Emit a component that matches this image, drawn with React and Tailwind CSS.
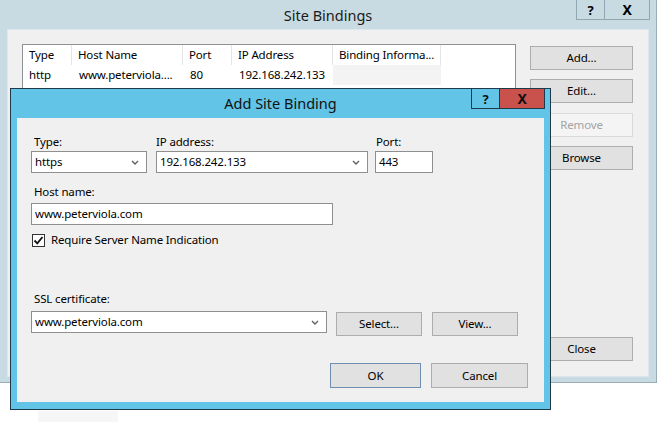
import React from "react";

const Chevron = () => (
  <svg width="8" height="5" viewBox="0 0 8 5" className="shrink-0">
    <polyline points="1,1 4,4 7,1" fill="none" stroke="#606060" strokeWidth="1.4" />
  </svg>
);

const Btn = ({ children, className = "", disabled = false }) => (
  <div
    className={
      "flex items-center justify-center border " +
      (disabled
        ? "bg-[#f4f4f4] border-[#d9d9d9] text-[#a3a3a3] "
        : "bg-[#e1e1e1] border-[#adadad] text-black ") +
      className
    }
  >
    {children}
  </div>
);

const Select = ({ value, className = "" }) => (
  <div className={"flex items-center justify-between bg-white border border-[#8f8f8f] pl-[3px] pr-[7px] " + className}>
    <span>{value}</span>
    <Chevron />
  </div>
);

export default function App() {
  return (
    <div
      className="relative w-[658px] h-[422px] bg-white overflow-hidden text-[11.5px] leading-[16px] tracking-[-0.15px] text-black whitespace-nowrap"
      style={{ fontFamily: '"Noto Sans", "Open Sans", sans-serif' }}
    >
      {/* Outer window: Site Bindings */}
      <div className="absolute left-0 top-0 w-[657px] h-[383px] bg-[#c8dbe2] border-r border-b border-[#98adb5] flex flex-col">
        <div className="h-[29px] flex items-start">
          <div className="w-[80px] shrink-0" />
          <div className="flex-1 text-center text-[14.5px] leading-[20px] pt-[5px] text-[#1a1a1a] tracking-normal">Site Bindings</div>
          <div className="flex w-[80px] shrink-0 h-[20px] justify-end pr-[6px]">
            <div className="w-[28px] border-l border-b border-[#8fa7b0] flex items-center justify-center font-bold text-[13px]">?</div>
            <div className="w-[46px] border-l border-r border-b border-[#8fa7b0] flex items-center justify-center font-bold text-[14px]">X</div>
          </div>
        </div>
        <div className="mx-[7px] h-[348px] bg-[#f0f0f0] border border-[#dde6ea] flex gap-[14px] p-[14px]">
          {/* list view */}
          <div className="w-[494px] h-full bg-white border border-[#8c9196] flex flex-col">
            <div className="flex h-[20px] items-center">
              <div className="w-[49px] pl-[6px] h-full flex items-center border-r border-[#e5e5e5]">Type</div>
              <div className="w-[111px] pl-[6px] h-full flex items-center border-r border-[#e5e5e5]">Host Name</div>
              <div className="w-[49px] pl-[6px] h-full flex items-center border-r border-[#e5e5e5]">Port</div>
              <div className="w-[101px] pl-[6px] h-full flex items-center border-r border-[#e5e5e5]">IP Address</div>
              <div className="w-[108px] pl-[6px] h-full flex items-center border-r border-[#e5e5e5] overflow-hidden">Binding Informa...</div>
            </div>
            <div className="flex h-[20px] items-center">
              <div className="w-[49px] pl-[6px]">http</div>
              <div className="w-[111px] pl-[7px]">www.peterviola....</div>
              <div className="w-[49px] pl-[7px]">80</div>
              <div className="w-[101px] pl-[7px]">192.168.242.133</div>
              <div className="w-[108px] h-full bg-[#f3f3f3]" />
            </div>
          </div>
          {/* buttons */}
          <div className="w-[103px] flex flex-col pt-[2px] pb-[1px]">
            <Btn className="h-[24px]">Add...</Btn>
            <Btn className="h-[24px] mt-[9px]">Edit...</Btn>
            <Btn className="h-[24px] mt-[10px]" disabled>Remove</Btn>
            <Btn className="h-[24px] mt-[9px]">Browse</Btn>
            <Btn className="h-[24px] mt-auto">Close</Btn>
          </div>
        </div>
      </div>

      {/* faint shadow remnant */}
      <div className="absolute left-[38px] top-[411px] w-[80px] h-[11px] bg-[#f6f6f6]" />

      {/* Dialog: Add Site Binding */}
      <div className="absolute left-[10px] top-[88px] w-[541px] h-[322px] bg-[#62c4e6] border border-[#1e3a4a] flex flex-col">
        <div className="h-[29px] flex items-start">
          <div className="w-[86px] shrink-0" />
          <div className="flex-1 text-center text-[14.5px] leading-[20px] pt-[4px] text-[#111] tracking-normal">Add Site Binding</div>
          <div className="flex w-[86px] shrink-0 h-[20px] justify-end pr-[5px]">
            <div className="w-[28px] border-l border-b border-[#1e3a4a] flex items-center justify-center font-bold text-[13px] text-[#111]">?</div>
            <div className="w-[46px] bg-[#c9524c] border-l border-r border-b border-[#1e3a4a] flex items-center justify-center font-bold text-[14px] text-[#111]">X</div>
          </div>
        </div>
        <div className="mx-[6px] h-[284px] bg-[#f0f0f0] border-l border-[#e4f3f9] pl-[13px] flex flex-col">
          {/* row 1 */}
          <div className="flex pt-[16px]">
            <div className="flex flex-col w-[116px]">
              <div className="pl-[3px] h-[16px]">Type:</div>
              <Select value="https" className="mt-[1px] h-[22px]" />
            </div>
            <div className="flex flex-col w-[212px] ml-[9px]">
              <div className="pl-0 h-[16px]">IP address:</div>
              <Select value="192.168.242.133" className="mt-[1px] h-[22px]" />
            </div>
            <div className="flex flex-col w-[58px] ml-[7px]">
              <div className="pl-[1px] h-[16px]">Port:</div>
              <div className="mt-[1px] h-[22px] bg-white border border-[#8f8f8f] pl-[3px] flex items-center">443</div>
            </div>
          </div>
          {/* host name */}
          <div className="pl-[3px] h-[16px] mt-[11px]">Host name:</div>
          <div className="mt-[3px] w-[302px] h-[22px] bg-white border border-[#8f8f8f] pl-[3px] flex items-center">
            www.peterviola.com
          </div>
          {/* checkbox */}
          <div className="flex items-center mt-[8px] h-[14px]">
            <div className="w-[13px] h-[13px] ml-[1px] bg-white border border-[#333] flex items-center justify-center">
              <svg width="11" height="11" viewBox="0 0 11 11">
                <polyline points="1.5,5.5 4.3,8.3 9.5,2" fill="none" stroke="#111" strokeWidth="1.8" />
              </svg>
            </div>
            <span className="ml-[6px]">Require Server Name Indication</span>
          </div>
          {/* ssl */}
          <div className="pl-[3px] h-[16px] mt-[44px]">SSL certificate:</div>
          <div className="flex items-start mt-[4px]">
            <Select value="www.peterviola.com" className="w-[296px] h-[22px]" />
            <Btn className="w-[86px] h-[24px] ml-[9px] mt-[1px]">Select...</Btn>
            <Btn className="w-[86px] h-[24px] ml-[10px] mt-[1px]">View...</Btn>
          </div>
          {/* ok cancel */}
          <div className="flex justify-end mt-[27px] pr-[16px]">
            <div className="w-[91px] h-[25px] bg-[#e1e1e1] border border-[#6f8fb0] flex items-center justify-center">OK</div>
            <Btn className="w-[97px] h-[25px] ml-[10px]">Cancel</Btn>
          </div>
        </div>
      </div>
    </div>
  );
}
